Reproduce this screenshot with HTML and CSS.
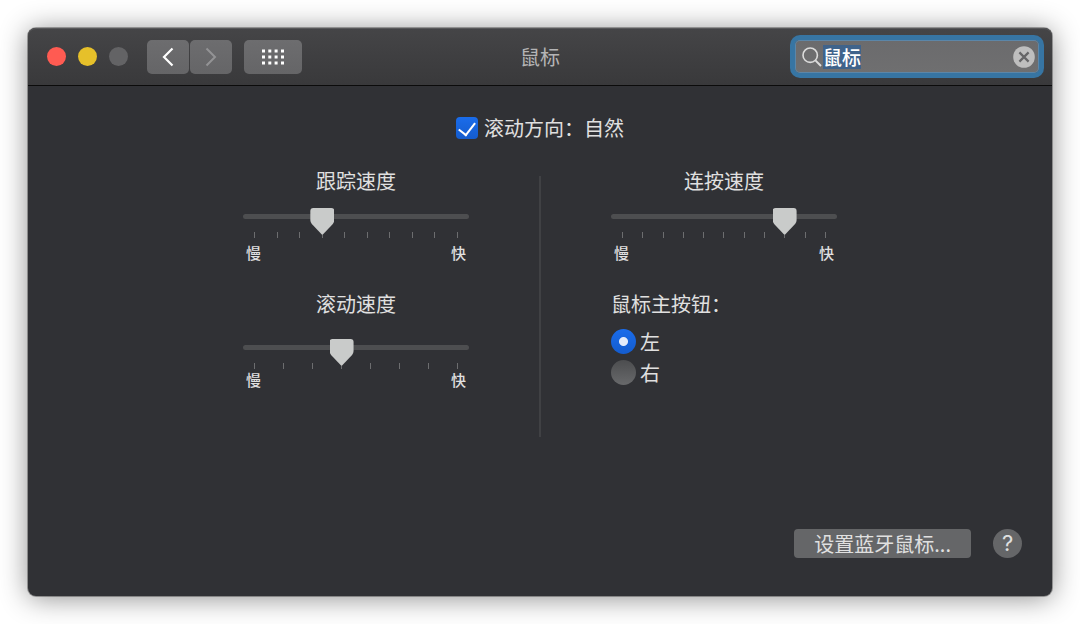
FILE: index.html
```html
<!DOCTYPE html>
<html lang="zh-CN">
<head>
    <meta charset="UTF-8">
    <meta name="viewport" content="width=device-width, initial-scale=1.0">
    <title>鼠标</title>
    <link rel="stylesheet" href="styles.css">
</head>
<body>
    <div class="window">
        <header class="titlebar">
            <div class="toolbar">
                <div class="lights">
                    <button class="light close" aria-label="关闭"></button>
                    <button class="light minimize" aria-label="最小化"></button>
                    <button class="light" aria-label="缩放" disabled></button>
                </div>
                <div class="nav">
                    <button class="tool-btn" aria-label="后退">
                        <svg width="12" height="20" viewBox="0 0 12 20"><path d="M10.5 1.5L2 10l8.5 8.5" fill="none" stroke="#fff" stroke-width="2.2"/></svg>
                    </button>
                    <button class="tool-btn" aria-label="前进" disabled>
                        <svg width="12" height="20" viewBox="0 0 12 20"><path d="M1.5 1.5L10 10l-8.5 8.5" fill="none" stroke="#939395" stroke-width="2"/></svg>
                    </button>
                </div>
                <button class="tool-btn show-all" aria-label="显示全部">
                    <svg width="22" height="16" viewBox="0 0 22 16" fill="#fff">
                        <path d="M0 .5h3v3H0zM6.3 .5h3v3h-3zM12.6 .5h3v3h-3zM19 .5h3v3h-3z"/>
                        <path d="M0 6.5h3v3H0zM6.3 6.5h3v3h-3zM12.6 6.5h3v3h-3zM19 6.5h3v3h-3z"/>
                        <path d="M0 12.5h3v3H0zM6.3 12.5h3v3h-3zM12.6 12.5h3v3h-3zM19 12.5h3v3h-3z"/>
                    </svg>
                </button>
            </div>
            <h1>鼠标</h1>
            <div class="search">
                <svg width="20" height="20" viewBox="0 0 20 20" fill="none" stroke="#dcdcdc" stroke-width="1.6"><circle cx="8.2" cy="8.2" r="7.2"/><path d="M13.4 13.4L19 19" stroke-width="2"/></svg>
                <input type="text" id="searchInput" value="鼠标" aria-label="搜索">
                <button class="clear" aria-label="清除">
                    <svg width="22" height="22" viewBox="0 0 22 22"><circle cx="11" cy="11" r="10.8" fill="#bebebe"/><path d="M6.4 6.4l9.2 9.2M15.6 6.4l-9.2 9.2" stroke="#656567" stroke-width="2.2"/></svg>
                </button>
            </div>
        </header>

        <main>
            <label class="natural"><input type="checkbox" class="checkbox" checked>滚动方向：自然</label>

            <div class="columns">
                <div class="column">
                    <div class="slider">
                        <label for="tracking">跟踪速度</label>
                        <input type="range" id="tracking" min="0" max="9" value="3">
                        <div class="ticks"><i></i><i></i><i></i><i></i><i></i><i></i><i></i><i></i><i></i><i></i></div>
                        <div class="ends"><span>慢</span><span>快</span></div>
                    </div>
                    <div class="slider scrolling">
                        <label for="scrolling">滚动速度</label>
                        <input type="range" id="scrolling" min="0" max="7" value="3">
                        <div class="ticks"><i></i><i></i><i></i><i></i><i></i><i></i><i></i><i></i></div>
                        <div class="ends"><span>慢</span><span>快</span></div>
                    </div>
                </div>
                <div class="divider"></div>
                <div class="column">
                    <div class="slider">
                        <label for="doubleClick">连按速度</label>
                        <input type="range" id="doubleClick" min="0" max="10" value="8">
                        <div class="ticks"><i></i><i></i><i></i><i></i><i></i><i></i><i></i><i></i><i></i><i></i><i></i></div>
                        <div class="ends"><span>慢</span><span>快</span></div>
                    </div>
                    <fieldset class="primary">
                        <legend>鼠标主按钮：</legend>
                        <label><input type="radio" name="primary" checked>左</label>
                        <label><input type="radio" name="primary">右</label>
                    </fieldset>
                </div>
            </div>
        </main>

        <footer>
            <button class="push-btn">设置蓝牙鼠标...</button>
            <button class="help" aria-label="帮助">?</button>
        </footer>
    </div>

    <script>
        // 打开时选中搜索框内容
        const searchInput = document.getElementById('searchInput');
        searchInput.focus();
        searchInput.select();
    </script>
</body>
</html>
```
FILE: styles.css
```css
* {
    margin: 0;
    padding: 0;
    box-sizing: border-box;
}

body {
    padding: 28px;
    background: #fff;
    color: #e0e0e0;
    font-family: "Noto Sans CJK SC", sans-serif;
    font-size: 20px;
    line-height: 30px;
}

button,
input {
    border: none;
    outline: none;
    color: inherit;
    font: inherit;
    appearance: none;
}

svg {
    display: block;
}

/* 窗口 */
.window {
    display: flex;
    flex-direction: column;
    min-height: calc(100vh - 56px);
    background: #303135;
    border-radius: 8px;
    box-shadow: 0 0 0 1px rgba(0, 0, 0, 0.3), 0 2px 28px rgba(0, 0, 0, 0.45);
}

/* 标题栏 */
.titlebar {
    display: grid;
    grid-template-columns: 1fr auto 1fr;
    align-items: center;
    height: 58px;
    padding: 0 13px;
    background: linear-gradient(#454547, #39393b);
    border-bottom: 1px solid #0b0b0b;
    border-radius: 8px 8px 0 0;
    box-shadow: inset 0 1px #58585a;
}

.titlebar h1 {
    color: #b4b4b5;
    font-size: 20px;
    font-weight: 400;
}

.toolbar {
    display: flex;
    align-items: center;
    padding-left: 6px;
}

.lights {
    display: flex;
    gap: 12px;
    margin-right: 19px;
}

.light {
    width: 19px;
    height: 19px;
    border-radius: 50%;
    background: #636365;
}

.close {
    background: #ff5b52;
}

.minimize {
    background: #e6c02a;
}

.nav {
    display: flex;
    gap: 1px;
    margin-right: 12px;
}

.tool-btn {
    display: flex;
    align-items: center;
    justify-content: center;
    width: 42px;
    height: 34px;
    border-radius: 5px;
    background: linear-gradient(#6d6d6f, #656567);
}

.show-all {
    width: 58px;
}

/* 搜索框 */
.search {
    display: flex;
    align-items: center;
    justify-self: end;
    width: 244px;
    height: 33px;
    padding: 0 4px 0 7px;
    border-radius: 5px;
    background: linear-gradient(#6b6b6d, #6f6f70);
}

.search:focus-within {
    box-shadow: inset 0 0 0 1px #5c86a8, 0 0 0 5px #3775a3;
}

.search input {
    flex: 1;
    min-width: 0;
    height: 24px;
    margin-left: 1px;
    background: none;
    color: #fff;
    font-size: 19px;
    font-weight: 500;
    line-height: 24px;
}

.search input::selection {
    background: #3f638b;
    color: #fff;
}

.clear {
    background: none;
}

/* 内容 */
main {
    padding-top: 27px;
}

.natural {
    display: flex;
    align-items: center;
    justify-content: center;
    gap: 6px;
}

.checkbox {
    width: 22px;
    height: 22px;
    border-radius: 4px;
    background: linear-gradient(#1a6ceb, #145ccd);
}

/* 对勾 */
.checkbox:checked::before {
    content: "";
    display: block;
    width: 8px;
    height: 14px;
    margin: 2px auto 0;
    border: solid #fff;
    border-width: 0 2px 2px 0;
    transform: rotate(38deg);
}

.columns {
    display: flex;
    justify-content: center;
    gap: 70px;
    margin-top: 33px;
}

.column {
    width: 226px;
}

.column > :first-child {
    margin-top: -10px;
}

.divider {
    width: 2px;
    height: 261px;
    background: #404144;
}

/* 滑块 */
.slider > label {
    display: block;
    text-align: center;
}

.slider input {
    display: block;
    width: 100%;
    height: 5px;
    margin-top: 18px;
    border-radius: 3px;
    background: #4d4e50;
}

.slider input::-webkit-slider-thumb {
    appearance: none;
    width: 24px;
    height: 27px;
    margin-top: 10px;
    background: #c9cbca;
    clip-path: path("M3 0H21Q24 0 24 3V12Q24 14 22.5 16L13 26Q12 27 11 26L1.5 16Q0 14 0 12V3Q0 0 3 0Z");
}

.ticks {
    display: flex;
    justify-content: space-between;
    margin-top: 13px;
    padding: 0 11px;
}

.ticks i {
    width: 1px;
    height: 6px;
    background: #6c6d6f;
}

.ends {
    display: flex;
    justify-content: space-between;
    padding: 0 3px;
    font-size: 15px;
    font-weight: 500;
    line-height: 30px;
}

.scrolling {
    margin-top: 21px;
}

.scrolling input {
    margin-top: 26px;
}

.scrolling .ends {
    line-height: 22px;
}

/* 主按钮 */
.primary {
    margin-top: 21px;
    border: none;
}

.primary legend {
    margin-bottom: 7px;
}

.primary label {
    display: flex;
    align-items: center;
    gap: 4px;
    height: 31px;
}

.primary input {
    width: 25px;
    height: 25px;
    border-radius: 50%;
    background: linear-gradient(#4c4d4f, #68696b);
}

.primary input:checked {
    background: radial-gradient(circle, #e4ecfa 4px, transparent 5px), linear-gradient(#1a6ceb, #145ccd);
}

/* 底部 */
footer {
    display: flex;
    justify-content: flex-end;
    gap: 22px;
    margin-top: auto;
    padding: 0 30px 38px;
}

.push-btn {
    height: 29px;
    padding: 0 20px;
    border-radius: 4px;
    background: #656668;
    line-height: 28px;
}

.help {
    width: 29px;
    height: 29px;
    border-radius: 50%;
    background: #656668;
    font-family: "Inter", sans-serif;
    font-size: 22px;
    line-height: 29px;
}
```
